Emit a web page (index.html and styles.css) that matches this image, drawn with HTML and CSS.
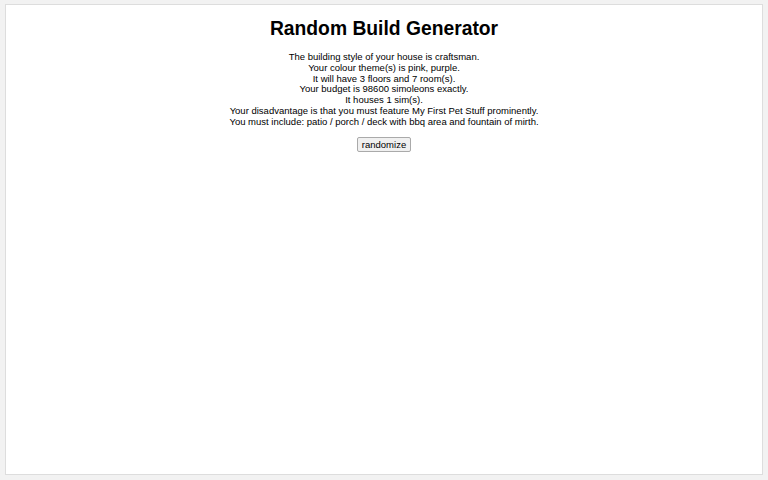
FILE: index.html
```html
<!DOCTYPE html>
<html lang="en">
<head>
    <meta charset="UTF-8">
    <meta name="viewport" content="width=device-width, initial-scale=1.0">
    <title>Random Build Generator</title>
    <link rel="stylesheet" href="styles.css">
</head>
<body>
    <div class="page">
        <h1>Random Build Generator</h1>

        <div class="result" id="result">
            <p>The building style of your house is craftsman.</p>
            <p>Your colour theme(s) is pink, purple.</p>
            <p>It will have 3 floors and 7 room(s).</p>
            <p>Your budget is 98600 simoleons exactly.</p>
            <p>It houses 1 sim(s).</p>
            <p>Your disadvantage is that you must feature My First Pet Stuff prominently.</p>
            <p>You must include: patio / porch / deck with bbq area and fountain of mirth.</p>
        </div>

        <button class="btn" id="randomize">randomize</button>
    </div>
</body>
</html>
```

FILE: styles.css
```css
* {
    margin: 0;
    padding: 0;
    box-sizing: border-box;
}

body {
    font-family: 'Liberation Sans', Arial, sans-serif;
    background: #f2f2f2;
    height: 100vh;
    padding: 4px 5px 5px 5px;
}

.page {
    background: #ffffff;
    border: 1px solid #dddddd;
    height: 100%;
    display: flex;
    flex-direction: column;
    align-items: center;
    padding-top: 12px;
}

h1 {
    color: #000000;
    font-size: 19.3px;
    font-weight: 700;
    line-height: 24px;
    margin-bottom: 11px;
}

.result {
    text-align: center;
    font-size: 9.5px;
    line-height: 10.8px;
    color: #000000;
}

.btn {
    margin-top: 9px;
    font-family: 'Liberation Sans', Arial, sans-serif;
    font-size: 9.5px;
    padding: 1px 4px;
    background: #f0f0f0;
    border: 1px solid #aaaaaa;
    border-radius: 2px;
    color: #000000;
    cursor: pointer;
}
```
